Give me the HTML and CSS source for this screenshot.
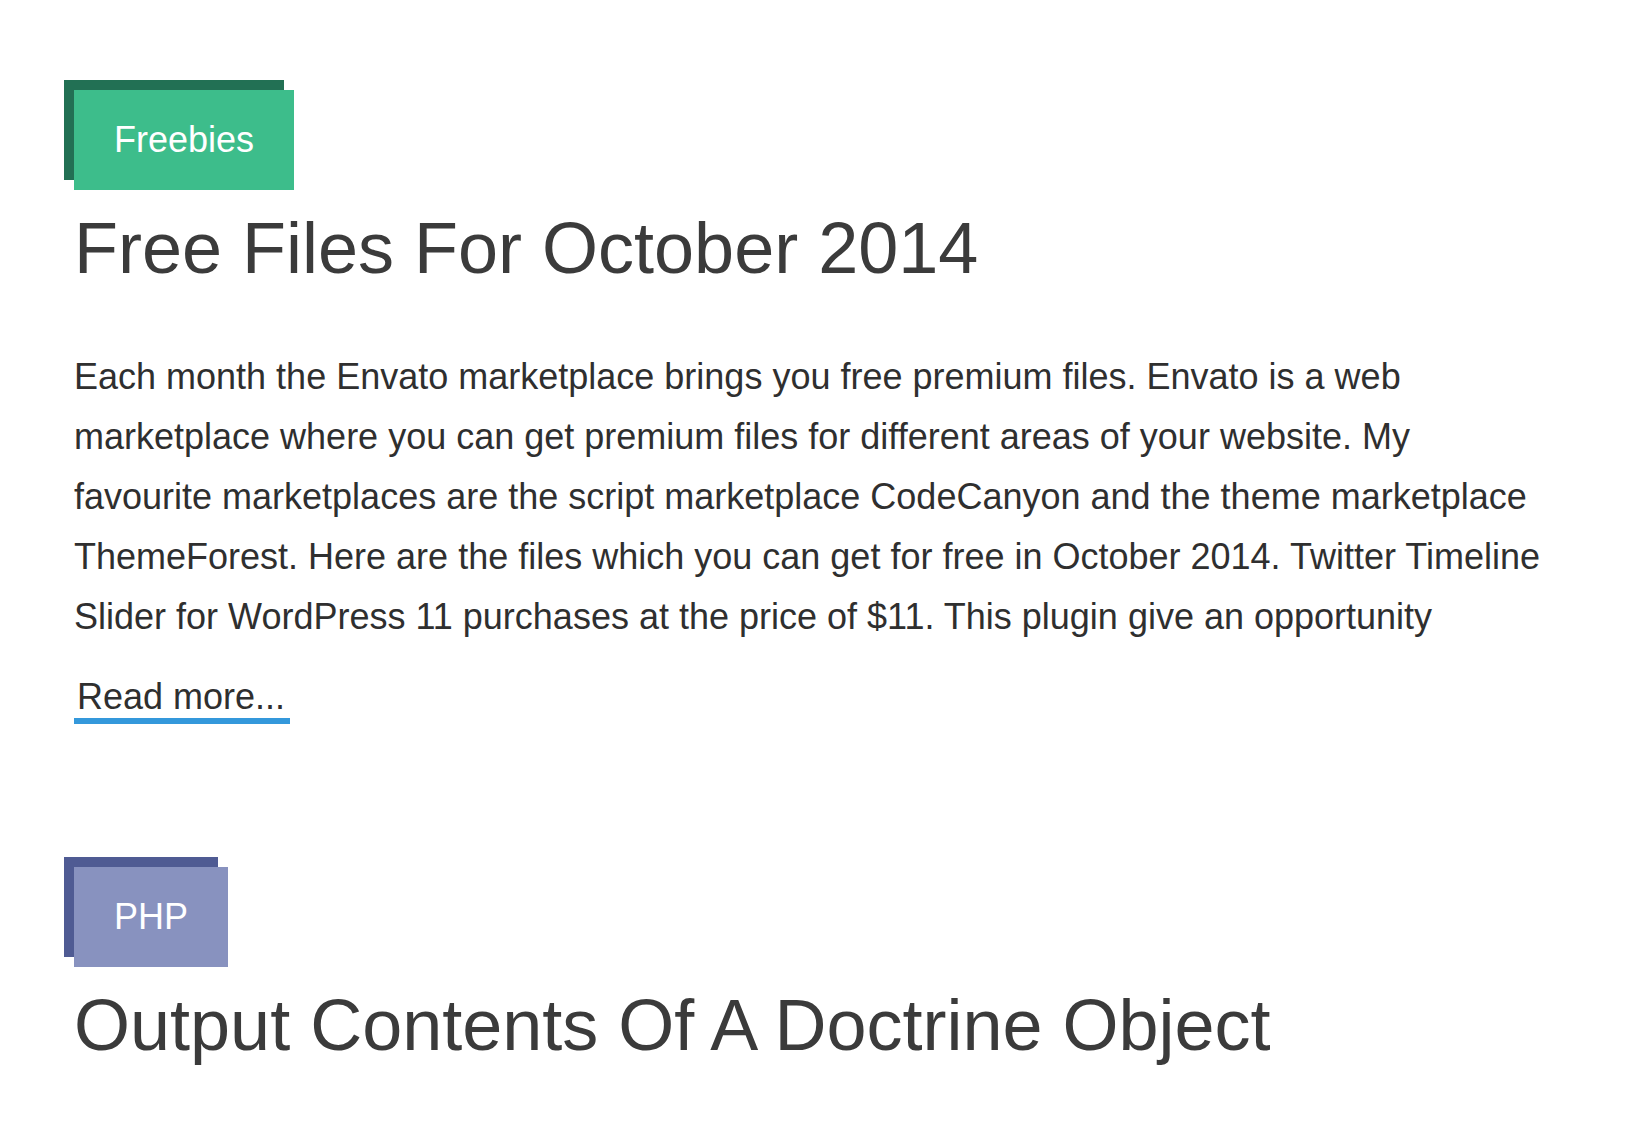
FILE: index.html
```html
<!DOCTYPE html>
<html lang="en">
<head>
<meta charset="utf-8">
<title>Blog</title>
<link rel="stylesheet" href="styles.css">
</head>
<body>
<main class="page">
  <article class="post">
    <a class="tag tag-green" href="#">Freebies</a>
    <h2 class="post-title">Free Files For October 2014</h2>
    <p class="post-excerpt">Each month the Envato marketplace brings you free premium files. Envato is a web marketplace where you can get premium files for different areas of your website. My favourite marketplaces are the script marketplace CodeCanyon and the theme marketplace ThemeForest. Here are the files which you can get for free in October 2014. Twitter Timeline Slider for WordPress 11 purchases at the price of $11. This plugin give an opportunity</p>
    <div class="more-row"><a class="more" href="#">Read more...</a></div>
  </article>
  <article class="post">
    <a class="tag tag-php" href="#">PHP</a>
    <h2 class="post-title">Output Contents Of A Doctrine Object</h2>
  </article>
</main>
</body>
</html>
```
FILE: styles.css
```css
html, body {
  margin: 0;
  padding: 0;
  background: #ffffff;
}

body {
  font-family: "Liberation Sans", Arial, Helvetica, sans-serif;
  color: #333333;
}

.page {
  padding: 90px 74px 0;
}

.post + .post {
  margin-top: 143px;
}

.tag {
  display: inline-block;
  font-size: 36px;
  line-height: normal;
  padding: 29px 40px;
  color: #ffffff;
  text-decoration: none;
}

.tag-green {
  background: #3dbd8b;
  box-shadow: -10px -10px 0 #227054;
}

.tag-php {
  background: #8892bf;
  box-shadow: -10px -10px 0 #4f5b93;
}

.post-title {
  margin: 17px 0 0;
  font-size: 72px;
  font-weight: 400;
  line-height: normal;
  color: #3b3b3b;
}

.post-excerpt {
  margin: 58px 0 0;
  font-size: 36px;
  line-height: 60px;
  color: #2f2f2f;
}

.more-row {
  margin-top: 29px;
  font-size: 36px;
  line-height: normal;
}

.more {
  display: inline-block;
  padding: 0 5px 0 3px;
  color: #2f2f2f;
  text-decoration: none;
  border-bottom: 6px solid #3498db;
}
```
